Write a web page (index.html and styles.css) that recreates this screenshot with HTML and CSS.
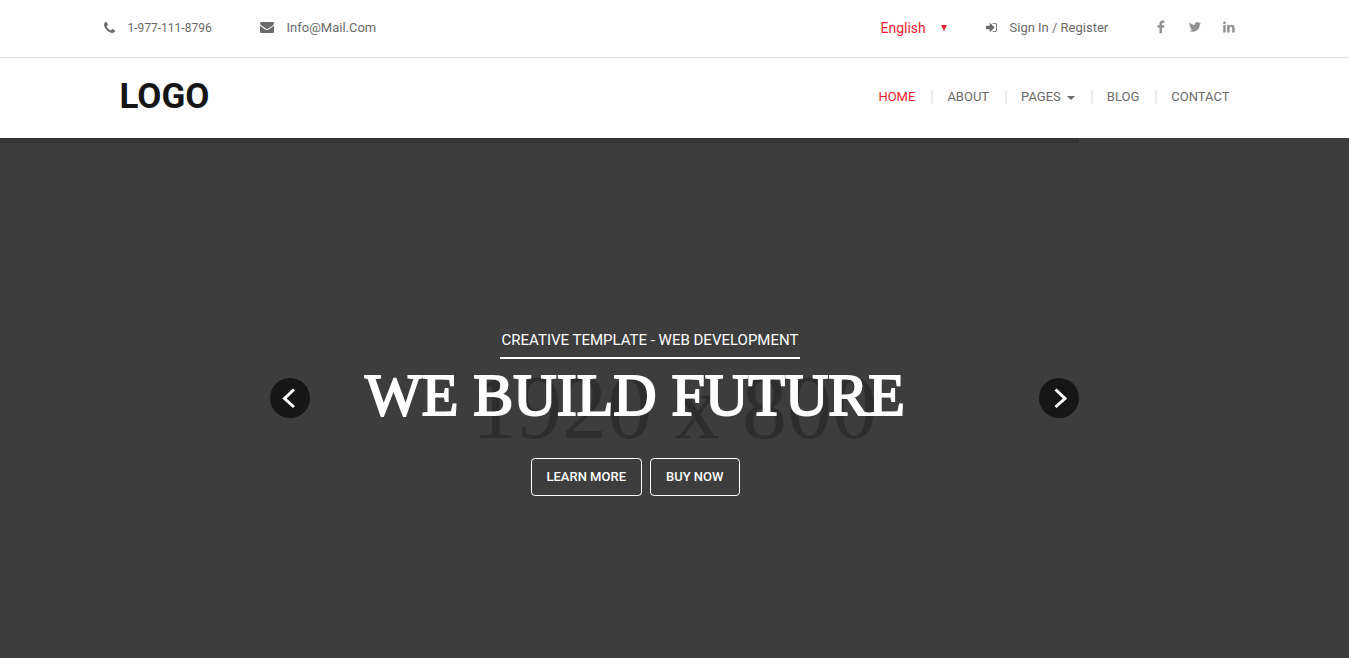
FILE: index.html
```html
<!DOCTYPE html>
<html lang="en">
<head>
<meta charset="utf-8">
<meta name="viewport" content="width=device-width, initial-scale=1">
<title>We Build Future</title>
<link rel="stylesheet" href="styles.css">
</head>
<body>
<header>
  <div class="topbar">
    <div class="container topbar-inner">
      <ul class="contacts">
        <li class="contact phone"><svg class="icon" viewBox="0 0 1408 1408" aria-hidden="true"><path d="M1408 1112q0 27-10 70.500t-21 68.500q-21 50-122 106-94 51-186 51-27 0-53-3.500t-57.500-12.500-47-14.500-55.500-20.500-49-18q-98-35-175-83-127-79-264-216t-216-264q-48-77-83-175-3-9-18-49t-20.500-55.500-14.500-47-12.500-57.500-3.500-53q0-92 51-186 56-101 106-122 25-11 68.500-21t70.500-10q14 0 21 3 18 6 53 76 11 19 30 54t35 63.500 31 53.500q3 4 17.500 25t21.500 35.500 7 28.500q0 20-28.500 50t-62 55-62 53-28.500 46q0 9 5 22.500t8.500 20.500 14 24 11.500 19q76 137 174 235t235 174q2 1 19 11.500t24 14 20.500 8.500 22.500 5q18 0 46-28.500t53-62 55-62 50-28.500q14 0 28.500 7t35.500 21.500 25 17.500q25 15 53.500 31t63.500 35 54 30q70 35 76 53 3 7 3 21z"/></svg>1-977-111-8796</li>
        <li class="contact"><svg class="icon wide" viewBox="0 0 1792 1408" aria-hidden="true"><path d="M1792 454v794q0 66-47 113t-113 47H160q-66 0-113-47T0 1248V454q44 49 101 87 362 246 497 345 57 42 92.500 65.500t94.500 48 110 24.500h2q51 0 110-24.500t94.500-48T1194 886q170-123 498-345 57-39 100-87zm0-294q0 79-49 151t-122 123q-376 261-468 325-10 7-42.500 30.500t-54 38-52 32.500-57.500 27-50 9h-2q-23 0-50-9t-57.500-27-52-32.500-54-38T639 759q-91-64-262-182.500T172 434q-62-42-117-115.500T0 182q0-78 41.500-130T160 0h1472q65 0 112.500 47T1792 160z"/></svg><a href="mailto:info@mail.com">Info@Mail.Com</a></li>
      </ul>
      <div class="account">
        <label class="language"><select class="language-select" aria-label="Language"><option>English</option></select><span class="language-arrow" aria-hidden="true"></span></label>
        <a class="signin" href="#"><svg class="icon" viewBox="0 0 1536 1280" aria-hidden="true"><path d="M1184 640q0 26-19 45l-544 544q-19 19-45 19t-45-19-19-45V896H64q-26 0-45-19T0 832V448q0-26 19-45t45-19h448V96q0-26 19-45t45-19 45 19l544 544q19 19 19 45zM1536 288v704q0 119-84.500 203.500T1248 1280H928q-26 0-26-30v-68q0-30 26-30h320q66 0 113-47t47-113V288q0-66-47-113t-113-47H928q-26 0-26-32V32q0-32 26-32h320q119 0 203.500 84.500T1536 288z"/></svg>Sign In / Register</a>
        <ul class="social">
          <li><a href="#" aria-label="Facebook"><svg class="brand" viewBox="0 0 14 14"><path d="M10.500.6v2.200H9.200c-1 0-1.200.4-1.200 1.100v1.400h2.400l-.3 2.400H8V13.200H5.500V7.700H3.500V5.300h2V3.600C5.500 1.600 6.800.500 8.600.500c.8 0 1.600 0 1.900.1z"/></svg></a></li>
          <li><a href="#" aria-label="Twitter"><svg class="brand" viewBox="0 0 14 14"><path d="M13 3.200c-.3.500-.7.900-1.200 1.300v.3c0 3.300-2.500 7-7 7-1.400 0-2.700-.4-3.800-1.100 1.300.1 2.600-.2 3.600-1-1.100 0-2-.7-2.300-1.700.4.100.8 0 1.100-.1-1.100-.2-2-1.200-2-2.400.3.200.7.300 1.100.3C1.400 5.100 1.100 3.700 1.800 2.500c1.200 1.500 3 2.500 5 2.600-.3-1.700.9-3.100 2.500-3.100.7 0 1.300.3 1.800.8.500-.1 1.100-.3 1.500-.6-.2.600-.5 1-1 1.300.4 0 1-.1 1.400-.3z"/></svg></a></li>
          <li><a href="#" aria-label="LinkedIn"><svg class="brand" viewBox="0 0 14 14"><path d="M1.200 5h2.500v7.400H1.200zM2.500 1.400c.9 0 1.400.6 1.400 1.300S3.300 4 2.400 4 1 3.400 1 2.700s.6-1.300 1.500-1.300zM5.100 5h2.500v1.100c.3-.5.900-1.300 2.200-1.300 1.700 0 2.900 1.100 2.900 3.400v4.200h-2.500V8.500c0-1-.4-1.700-1.200-1.700-.9 0-1.400.7-1.400 1.600v4H5.100z"/></svg></a></li>
        </ul>
      </div>
    </div>
  </div>
  <div class="container masthead">
    <a class="logo" href="#">LOGO</a>
    <nav>
      <ul class="menu">
        <li><a class="active" href="#">HOME</a></li>
        <li><a href="#">ABOUT</a></li>
        <li><a class="has-menu" href="#">PAGES</a></li>
        <li><a href="#">BLOG</a></li>
        <li><a href="#">CONTACT</a></li>
      </ul>
    </nav>
  </div>
</header>
<main class="hero">
  <div class="progress"></div>
  <div class="watermark" aria-hidden="true">1920 x 800</div>
  <div class="caption">
    <p class="tagline">CREATIVE TEMPLATE - WEB DEVELOPMENT</p>
    <h1 class="title">WE BUILD FUTURE</h1>
    <div class="actions">
      <button class="btn" type="button">LEARN MORE</button>
      <button class="btn" type="button">BUY NOW</button>
    </div>
  </div>
  <button class="arrow prev" type="button" aria-label="Previous slide"><svg class="chevron" viewBox="0 0 40 40"><path d="M24 11.500 14.500 20.500 24 29"/></svg></button>
  <button class="arrow next" type="button" aria-label="Next slide"><svg class="chevron" viewBox="0 0 40 40"><path d="M16.500 11.500 26 20.500 16.500 29"/></svg></button>
</main>
</body>
</html>
```
FILE: styles.css
```css
* { box-sizing: border-box; }
body {
  margin: 0;
  min-height: 100vh;
  display: flex;
  flex-direction: column;
  background: #fefefe;
  color: #6b6b6b;
  font-family: Roboto, "Noto Sans", sans-serif;
  font-size: 13px;
  line-height: 20px;
}
a { color: inherit; text-decoration: none; }
ul { margin: 0; padding: 0; list-style: none; }
svg { display: block; fill: currentColor; }
.container { width: 100%; max-width: 1170px; margin: 0 auto; padding: 0 15px; }
.topbar { border-bottom: 1px solid #dcdcdc; }
.topbar-inner { display: flex; justify-content: space-between; align-items: center; min-height: 57px; padding: 0 24px 2px 14px; }
.contacts, .account, .social { display: flex; align-items: center; }
.contact { display: flex; align-items: center; gap: 13px; }
.phone { width: 156px; font-size: 12px; }
.icon { width: 11px; height: 11px; }
.icon.wide { width: 14px; }
.language { display: flex; align-items: center; width: 105px; color: #ee1c2e; font-size: 14px; }
.language-select {
  appearance: none;
  width: 60px;
  padding: 0;
  border: 0;
  background: none;
  color: inherit;
  font: inherit;
}
.language-arrow { border: 3px solid transparent; border-top: 6px solid #ee1c2e; border-bottom: 0; }
.signin { display: flex; align-items: center; gap: 13px; width: 168px; }
.social { gap: 20px; padding-bottom: 2px; color: #929292; }
.brand { width: 14px; height: 14px; }
.masthead { display: flex; justify-content: space-between; align-items: center; min-height: 80px; padding: 0 30px 2px; }
.logo { color: #151515; font-size: 35px; font-weight: 700; line-height: 40px; }
.menu { display: flex; font-size: 13px; line-height: 14px; }
.menu li + li { margin-left: 16px; padding-left: 14px; border-left: 2px solid #ebebeb; }
.active { color: #ee1c2e; }
.has-menu::after {
  content: "";
  display: inline-block;
  margin-left: 6px;
  vertical-align: middle;
  border: 4px solid transparent;
  border-top-color: currentColor;
  border-bottom: 0;
}
.hero { position: relative; flex: 1; min-height: 520px; overflow: hidden; background: #3d3d3d; color: #fff; }
.progress { width: 80%; height: 5px; background: #333; }
.watermark {
  position: absolute;
  inset: 20px 0 0;
  display: grid;
  place-items: center;
  color: #2d2d2d;
  font: 90px/100px "Liberation Serif", serif;
}
.caption { position: relative; display: flex; flex-direction: column; align-items: center; padding: 182px 79px 0 0; }
.tagline {
  width: 300px;
  margin: 0 0 0 30px;
  padding: 5px 0 6px;
  border-bottom: 2px solid #fff;
  font-size: 15px;
  line-height: 21px;
  text-align: center;
  white-space: nowrap;
}
.title { margin: 6px 0 33px; font: 400 60px/60px "Liberation Serif", serif; -webkit-text-stroke: 2px #fff; white-space: nowrap; }
.actions { display: flex; gap: 8px; }
.btn {
  min-height: 38px;
  padding: 8px 15px;
  border: 1px solid #fff;
  border-radius: 4px;
  background: none;
  color: #fff;
  font: 500 13px/20px Roboto, "Noto Sans", sans-serif;
}
.arrow { position: absolute; top: 240px; width: 40px; height: 40px; padding: 0; border: 0; border-radius: 50%; background: #161616; color: #fff; }
.prev { left: 20%; }
.next { right: 20%; }
.chevron { width: 40px; height: 40px; fill: none; stroke: currentColor; stroke-width: 3; }
```
